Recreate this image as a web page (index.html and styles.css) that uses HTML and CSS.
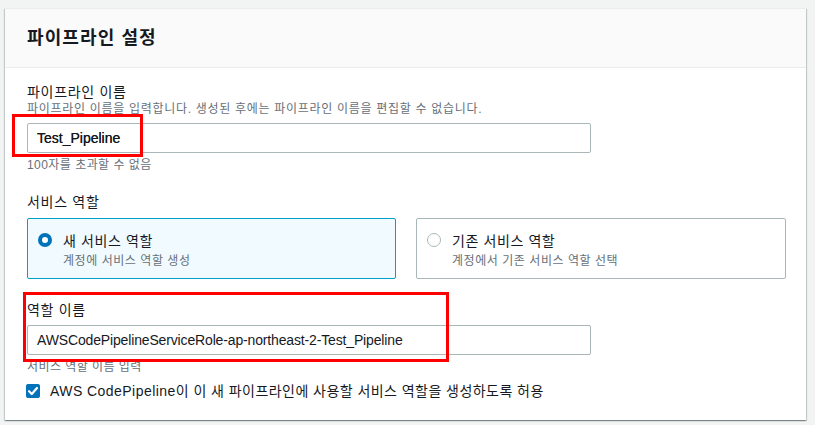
FILE: index.html
```html
<!DOCTYPE html>
<html lang="ko">
<head>
<meta charset="utf-8">
<title>파이프라인 설정</title>
<link rel="stylesheet" href="styles.css">
</head>
<body>
<div class="card">
  <div class="card-header">
    <h2 class="title">파이프라인 설정</h2>
  </div>
  <div class="card-body">
    <div class="field">
      <div class="label">파이프라인 이름</div>
      <div class="desc">파이프라인 이름을 입력합니다. 생성된 후에는 파이프라인 이름을 편집할 수 없습니다.</div>
      <div class="input-wrap">
        <div class="input strong">Test_Pipeline</div>
        <div class="highlight hl-1"></div>
      </div>
      <div class="hint">100자를 초과할 수 없음</div>
    </div>

    <div class="field field-role">
      <div class="label">서비스 역할</div>
      <div class="tiles">
        <div class="tile selected">
          <span class="radio checked"></span>
          <div class="tile-text">
            <div class="tile-title">새 서비스 역할</div>
            <div class="tile-sub">계정에 서비스 역할 생성</div>
          </div>
        </div>
        <div class="tile">
          <span class="radio"></span>
          <div class="tile-text">
            <div class="tile-title">기존 서비스 역할</div>
            <div class="tile-sub">계정에서 기존 서비스 역할 선택</div>
          </div>
        </div>
      </div>
    </div>

    <div class="field field-name">
      <div class="label">역할 이름</div>
      <div class="input">AWSCodePipelineServiceRole-ap-northeast-2-Test_Pipeline</div>
      <div class="hint hint-2">서비스 역할 이름 입력</div>
      <div class="highlight hl-2"></div>
    </div>

    <label class="check-row">
      <span class="checkbox">
        <svg width="14" height="14" viewBox="0 0 14 14"><path d="M3 7.2 L5.8 10 L11 4" fill="none" stroke="#fff" stroke-width="2.2" stroke-linecap="round" stroke-linejoin="round"/></svg>
      </span>
      <span class="check-text">AWS CodePipeline이 이 새 파이프라인에 사용할 서비스 역할을 생성하도록 허용</span>
    </label>
  </div>
</div>
</body>
</html>
```

FILE: styles.css
```css
* { box-sizing: border-box; }
html, body { margin: 0; padding: 0; }
body {
  background: #f2f3f3;
  font-family: "Liberation Sans", "Noto Sans CJK KR", sans-serif;
  color: #16191f;
  width: 815px;
  height: 425px;
  overflow: hidden;
}
.card {
  margin: 8px 0 0 5px;
  width: 801px;
  height: 412px;
  background: #fff;
  border-top: 1px solid #eaeded;
  box-shadow: 0 1px 1px 0 rgba(0,28,36,.3), 1px 1px 1px 0 rgba(0,28,36,.15), -1px 1px 1px 0 rgba(0,28,36,.15);
}
.card-header {
  background: #fafafa;
  height: 59px;
  border-bottom: 1px solid #eaeded;
  padding: 0 22px;
  display: flex;
  align-items: center;
}
.title {
  margin: 0;
  font-size: 18px;
  font-weight: 700;
  line-height: 22px;
  color: #16191f;
  letter-spacing: 1.1px;
}
.card-body {
  padding: 14px 22px 0 22px;
}
.field { position: relative; }
.label {
  font-size: 14px;
  line-height: 20px;
  color: #16191f;
  letter-spacing: 0.7px;
}
.desc {
  font-size: 12px;
  line-height: 16px;
  color: #687078;
  margin-top: -1px;
  letter-spacing: 0.7px;
}
.input-wrap { position: relative; margin-top: 6px; }
.input {
  width: 564px;
  height: 30px;
  border: 1px solid #aab7b8;
  border-radius: 2px;
  padding: 0 9px;
  font-size: 14px;
  line-height: 28px;
  color: #16191f;
  background: #fff;
  letter-spacing: -0.15px;
}
.input.strong { text-shadow: 0 0 0.6px #16191f; letter-spacing: 0; }
.hint {
  font-size: 12px;
  line-height: 16px;
  color: #687078;
  margin-top: 4px;
  letter-spacing: 0.45px;
}
.field-role { margin-top: 19px; }
.tiles {
  display: grid;
  grid-template-columns: 369px 370px;
  gap: 20px;
  margin-top: 6px;
}
.tile {
  height: 61px;
  border: 1px solid #aab7b8;
  border-radius: 2px;
  display: flex;
  align-items: flex-start;
  padding: 13px 10px 0 10px;
}
.tile.selected {
  background: #f1faff;
  border-color: #00a1c9;
}
.radio {
  width: 14px;
  height: 14px;
  border-radius: 50%;
  border: 1px solid #aab7b8;
  background: #fff;
  flex: none;
  margin-top: 1px;
}
.radio.checked { border: 4px solid #0073bb; }
.tile-text { margin-left: 11px; }
.tile-title { font-size: 14px; line-height: 19px; color: #16191f; letter-spacing: 0.6px; }
.tile-sub { font-size: 12px; line-height: 16px; color: #687078; margin-top: 2px; letter-spacing: 0.55px; }
.field-name { margin-top: 21px; }
.field-name .input { margin-top: 5px; }
.hint-2 { margin-top: 4px; }
.highlight {
  position: absolute;
  border: 3px solid #ff0000;
  pointer-events: none;
}
.hl-1 { left: -15px; top: -9px; width: 131px; height: 43px; }
.hl-2 { left: -4px; top: -8px; width: 426px; height: 70px; }
.check-row {
  display: flex;
  align-items: center;
  margin-top: 6px;
  margin-left: -1px;
}
.checkbox {
  width: 14px;
  height: 14px;
  border-radius: 2px;
  background: #0073bb;
  display: flex;
  flex: none;
}
.check-text {
  margin-left: 10px;
  font-size: 14px;
  line-height: 20px;
  color: #16191f;
  letter-spacing: 0.45px;
}
```
